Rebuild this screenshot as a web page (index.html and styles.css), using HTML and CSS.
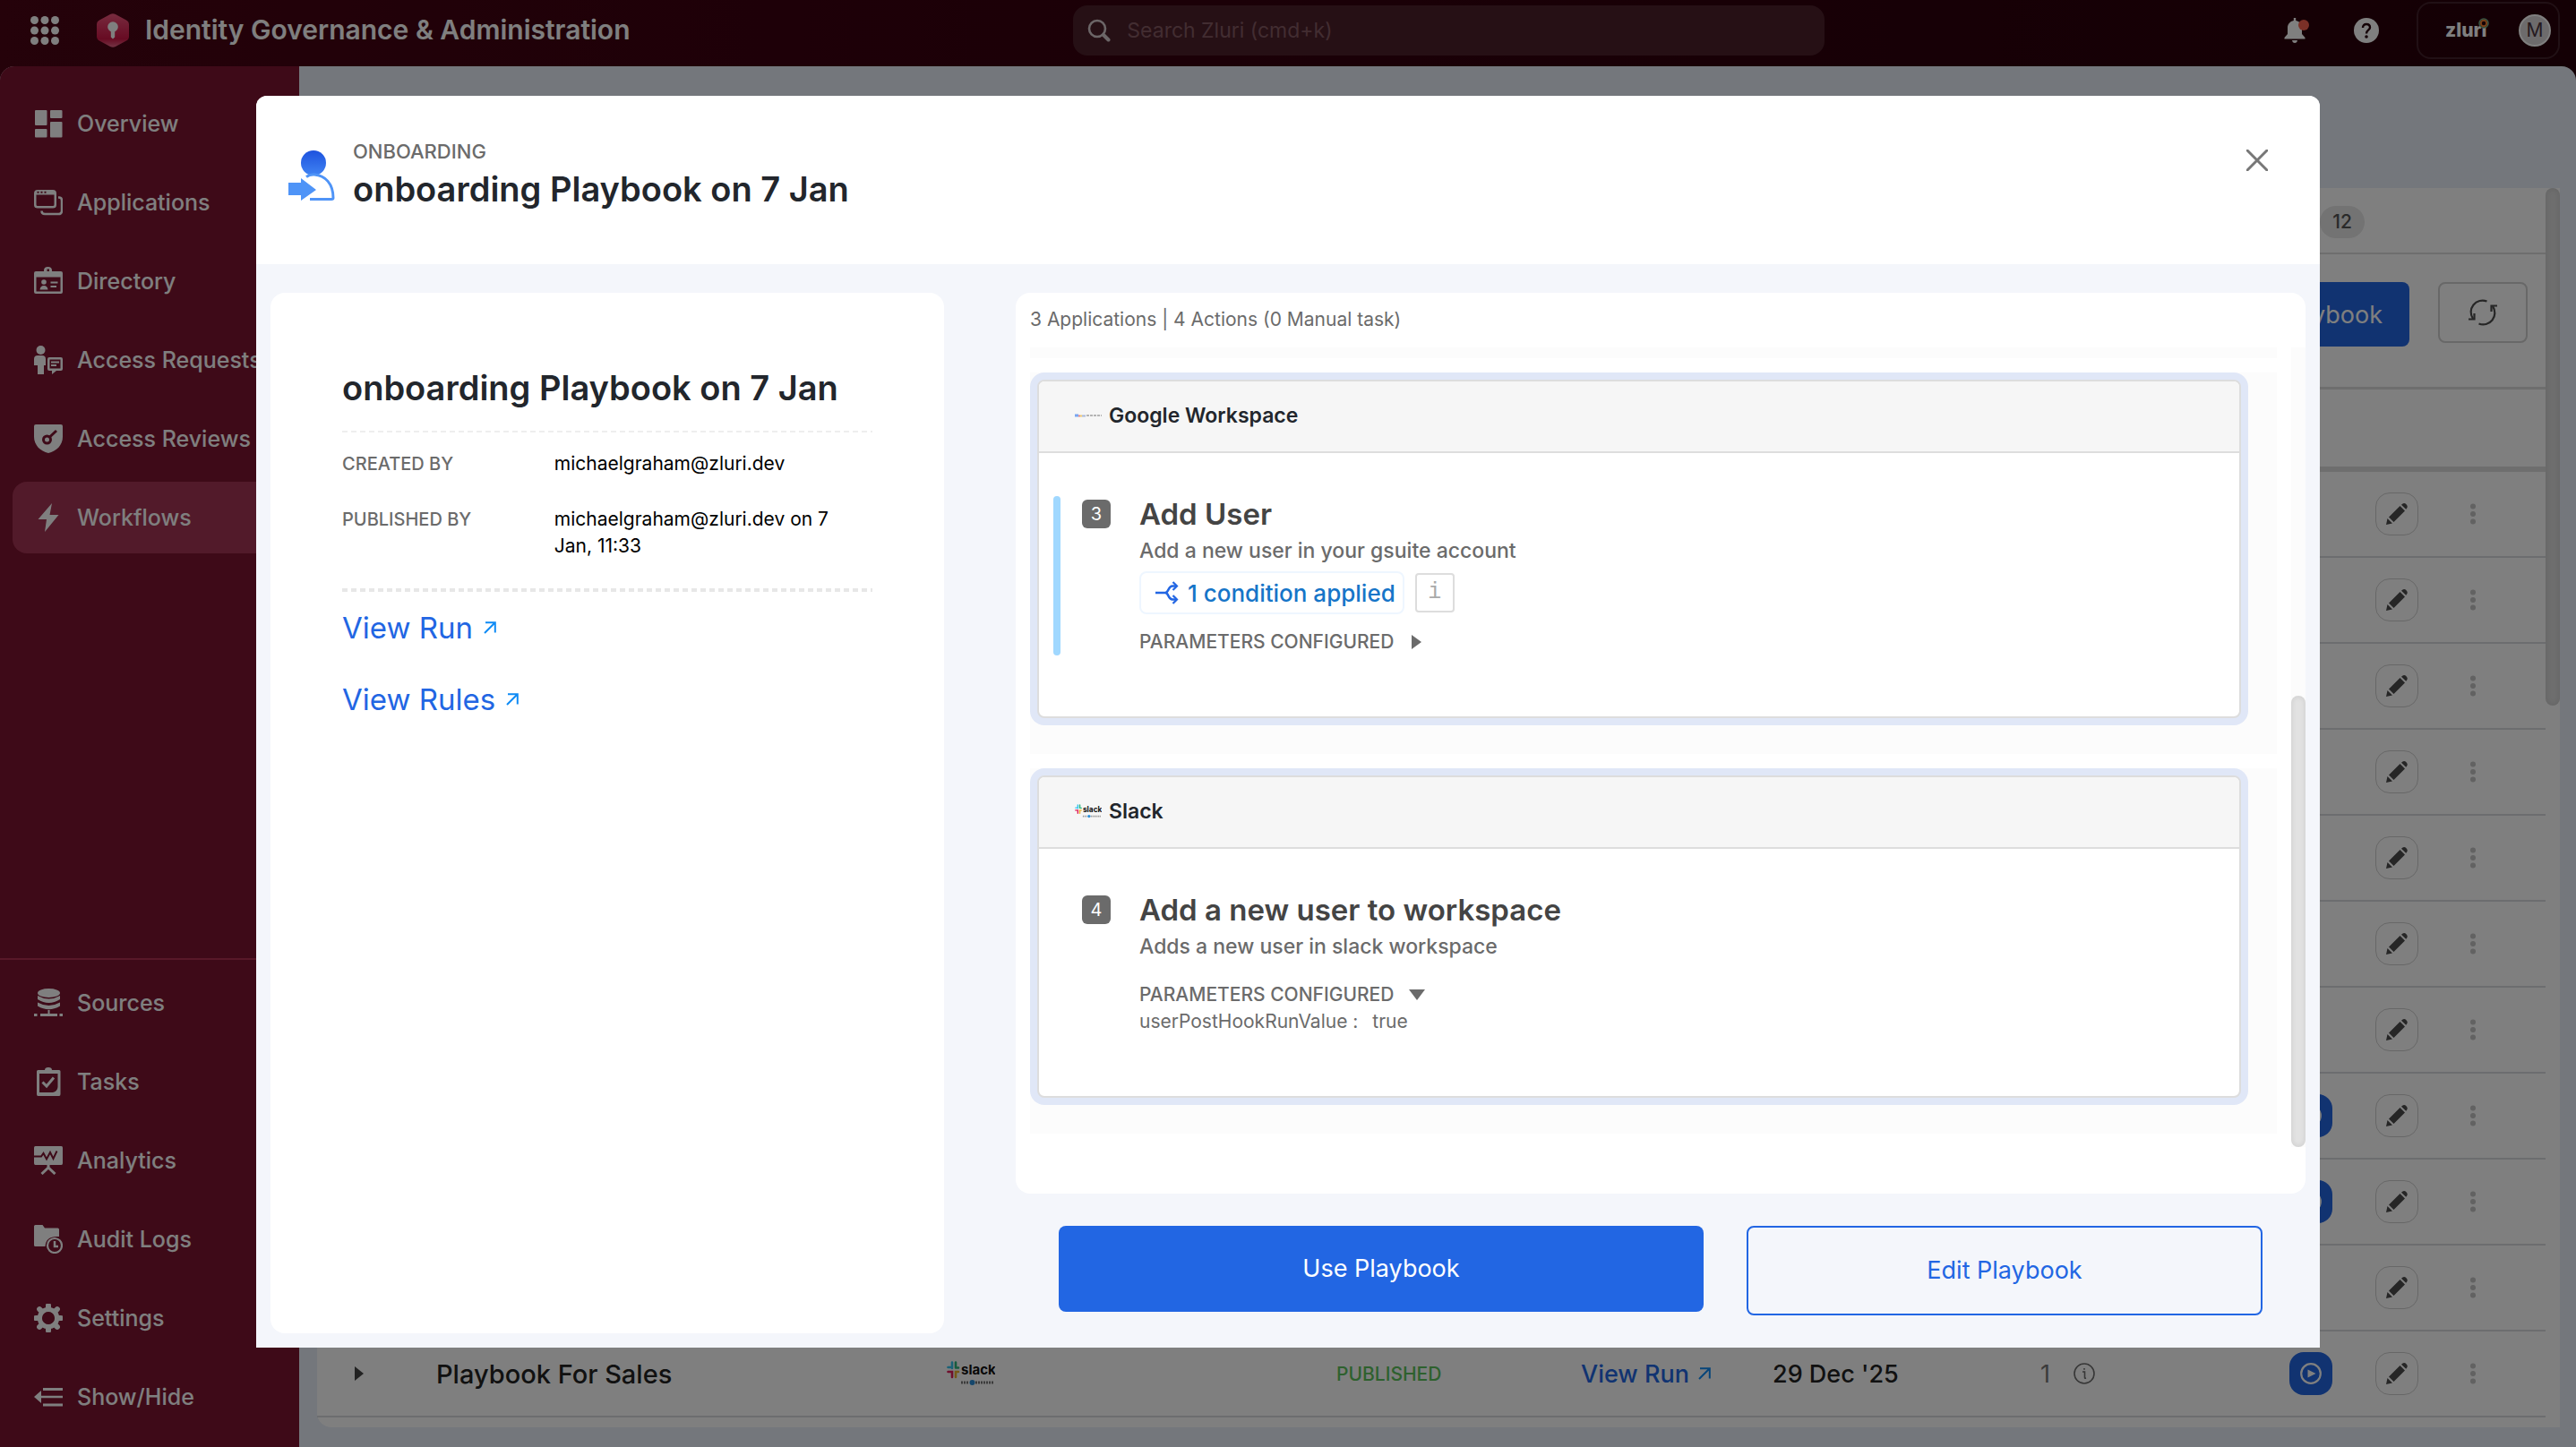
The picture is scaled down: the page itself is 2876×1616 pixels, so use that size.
FILE: index.html
```html
<!DOCTYPE html>
<html lang="en">
<head>
<meta charset="utf-8">
<title>Identity Governance &amp; Administration</title>
<link rel="stylesheet" href="styles.css">
</head>
<body>
<svg class="sprite" aria-hidden="true">
  <symbol id="i-pencil" viewBox="0 0 24 24"><path d="M0 24 1.500 17 7 22.500ZM3 15.500 15.500 3 21 8.500 8.500 21ZM17 1.800 18.200.8C19.500-.3 21-.2 22.300 1 24 2.600 24.200 4.200 23 5.700L22.200 6.800Z" fill="#4c4c4c"/></symbol>
  <symbol id="i-dots" viewBox="0 0 8 24"><circle cx="4" cy="3.500" r="3"/><circle cx="4" cy="12" r="3"/><circle cx="4" cy="20.500" r="3"/></symbol>
  <symbol id="i-play" viewBox="0 0 24 24"><circle cx="12" cy="12" r="10.800" fill="none" stroke="#fff" stroke-width="2.200"/><path d="M8.500 7.500 17.500 12 8.500 16.500Z" fill="#fff"/></symbol>
  <symbol id="i-out" viewBox="0 0 14 14"><path d="M1 13 12.500 1.500M2 1.200H12.800V12.500" fill="none" stroke="#0f8bf5" stroke-width="2"/></symbol>
  <symbol id="i-hash" viewBox="0 0 15 24"><g fill="none" stroke-width="2.600" stroke-linecap="round"><path d="M6 4.500V11M1.500 10H6" stroke="#36c5f0"/><path d="M10 4.500V10M10 10.500H13" stroke="#2eb67d"/><path d="M1.500 15H6V21" stroke="#e01e5a"/><path d="M10 21V15H13" stroke="#ecb22e"/></g></symbol>
</svg>

<header class="topbar">
  <div class="brand">
    <button class="plain" aria-label="Apps"><svg width="32" height="32" viewBox="0 0 32 32" fill="#fff"><circle cx="4.500" cy="4.500" r="4.500"/><circle cx="16" cy="4.500" r="4.500"/><circle cx="27.500" cy="4.500" r="4.500"/><circle cx="4.500" cy="16" r="4.500"/><circle cx="16" cy="16" r="4.500"/><circle cx="27.500" cy="16" r="4.500"/><circle cx="4.500" cy="27.500" r="4.500"/><circle cx="16" cy="27.500" r="4.500"/><circle cx="27.500" cy="27.500" r="4.500"/></svg></button>
    <svg class="logo" width="36" height="38" viewBox="0 0 36 38"><defs><linearGradient id="g1" x1="0" y1="0" x2="0" y2="1"><stop offset="0" stop-color="#f0587e"/><stop offset=".75" stop-color="#cf1646"/><stop offset="1" stop-color="#e86a8a"/></linearGradient></defs><path d="M15 1Q18-.5 21 1L33 7.500Q36 9 36 12.500V25.500Q36 29 33 30.500L21 37Q18 38.500 15 37L3 30.500Q0 29 0 25.500V12.500Q0 9 3 7.500Z" fill="url(#g1)"/><circle cx="18" cy="15" r="5.800" fill="#fff"/><path d="M15.800 18H20.200V26.500L18 28.500 15.800 26.500Z" fill="#fff"/></svg>
    <h1>Identity Governance &amp; Administration</h1>
  </div>
  <label class="search">
    <svg width="26" height="26" viewBox="0 0 26 26" fill="none" stroke="#d8cccf" stroke-width="2.600" stroke-linecap="round"><circle cx="11" cy="11" r="9"/><path d="M18 18 23.500 23.500" stroke-width="4"/></svg>
    <input type="text" placeholder="Search Zluri (cmd+k)" aria-label="Search Zluri">
  </label>
  <div class="tools">
    <button class="plain" aria-label="Notifications"><svg width="28" height="28" viewBox="0 0 28 28"><path d="M10.800 0H13.200V3C17.500 4 20 7 20 11V18L23.500 22V23.500H.5V22L4 18V11C4 7 6.500 4 10.800 3Z" fill="#fff"/><path d="M9 25H15Q14.500 28 12 28T9 25Z" fill="#fff"/><circle cx="22" cy="8" r="6" fill="#f5604e"/></svg></button>
    <button class="plain" aria-label="Help"><svg width="28" height="28" viewBox="0 0 28 28"><circle cx="14" cy="14" r="14" fill="#fff"/><path d="M10 11Q10 7 14 7T18 10.800C18 13.500 14 13.500 14 17.500" fill="none" stroke="#28000c" stroke-width="2.400"/><circle cx="14" cy="21" r="1.800" fill="#28000c"/></svg></button>
    <button class="account"><span class="wordmark">zluri<svg class="eye" width="12" height="12" viewBox="0 0 12 12"><circle cx="6" cy="6" r="5" fill="#28000c" stroke="#6fae8c" stroke-width="1.500"/><circle cx="6" cy="6" r="3.200" fill="none" stroke="#f08030" stroke-width="2"/></svg></span><span class="avatar">M</span></button>
  </div>
</header>

<div class="shell">
  <nav class="sidebar" aria-label="Main">
    <div class="nav-group">
      <a href="#"><svg viewBox="0 0 32 32"><rect x="1" y="1" width="13.500" height="17" rx="1"/><rect x="18" y="1" width="13.500" height="9" rx="1"/><rect x="1" y="22" width="13.500" height="9.500" rx="1"/><rect x="18" y="14" width="13.500" height="17.500" rx="1"/></svg>Overview</a>
      <a href="#"><svg viewBox="0 0 32 32"><path fill-rule="evenodd" d="M4 2H21Q25 2 25 6V19Q25 22.500 21 22.500H4Q0 22.500 0 19V6Q0 2 4 2ZM2.500 7.500V18.500Q2.500 20 4 20H21Q22.500 20 22.500 18.500V7.500ZM3.500 3.800V5.800H5.500V3.800ZM7.500 3.800V5.800H9.500V3.800ZM11.500 3.800V5.800H13.500V3.800Z"/><path d="M27 10.500H28Q31 10.500 31 14V25Q31 29 27.500 29H12Q8.500 29 8.500 25.500" fill="none" stroke="#fff" stroke-width="2.500"/></svg>Applications</a>
      <a href="#"><svg viewBox="0 0 32 32"><path fill-rule="evenodd" d="M2 5H11V4Q11 0 15.500 0T20 4V5H30Q32 5 32 7V28Q32 30 30 30H2Q0 30 0 28V7Q0 5 2 5ZM14.500 2.500V5H17V2.500ZM2.500 11.500V27.500H29.500V11.500Z"/><circle cx="11" cy="17" r="2.800"/><path d="M6.500 25.500Q7 21 11 21T15.500 25.500ZM18.500 16.500H26.500V18.500H18.500ZM18.500 21H25V23H18.500Z"/></svg>Directory</a>
      <a href="#"><svg viewBox="0 0 32 32"><circle cx="7.500" cy="5" r="5"/><path d="M4 11H9Q13 11 13 15V22H11V32H4V22H0V15Q0 11 4 11Z"/><path fill-rule="evenodd" d="M17 13H30Q32 13 32 15V26Q32 28 30 28H25L20 32V28H17Q15 28 15 26V15Q15 13 17 13ZM17.500 15.500V25.500H29.500V15.500ZM19 17.500H28V19.500H19ZM19 21H25V23H19Z"/></svg>Access Requests</a>
      <a href="#"><svg viewBox="0 0 32 32"><path d="M2 0H30Q32 0 32 2V14C32 23 25 30 16 32 7 30 0 23 0 14V2Q0 0 2 0Z"/><circle cx="14.500" cy="17" r="4" fill="none" stroke="#7c1430" stroke-width="3"/><path d="M17 14.500 25 7" stroke="#7c1430" stroke-width="3"/></svg>Access Reviews</a>
      <a href="#" class="active"><svg viewBox="0 0 32 32"><path d="M20 0 4.500 18H14L12 32 27.500 13H17.500Z"/></svg>Workflows</a>
    </div>
    <div class="nav-group nav-bottom">
      <a href="#"><svg viewBox="0 0 32 32"><ellipse cx="16.500" cy="5" rx="12.500" ry="5"/><path d="M4 8Q16.500 15 29 8V12Q16.500 20 4 12ZM4 15.500Q16.500 22.500 29 15.500V19.500Q16.500 27 4 19.500ZM15.500 24H17.500V28H26V31H7V28H15.500ZM0 28H3.500V31H0ZM28.500 28H32V31H28.500Z"/></svg>Sources</a>
      <a href="#"><svg viewBox="0 0 32 32"><path fill-rule="evenodd" d="M4.500 3H12Q12 0 16 0T20 3H28Q29.500 3 29.500 4.500V30Q29.500 32 28 32H4.500Q3 32 3 30V4.500Q3 3 4.500 3ZM6 7V28H21Q26 27 26.500 22V7Z"/><path d="M9.500 16.500 14 21 22 11.500" fill="none" stroke="#fff" stroke-width="3"/></svg>Tasks</a>
      <a href="#"><svg viewBox="0 0 32 32"><path d="M1.500 0H30.500Q32 0 32 1.500V19Q32 21 30.500 21H1.500Q0 21 0 19V1.500Q0 0 1.500 0Z"/><path d="M0 11.500H8L10.500 8 14 14.500 18 7 21.500 14 25.500 5.500" fill="none" stroke="#7c1430" stroke-width="2"/><path d="M16 21V24M8.500 31 16 24 23.500 31" fill="none" stroke="#fff" stroke-width="3"/></svg>Analytics</a>
      <a href="#"><svg viewBox="0 0 32 32"><path d="M1.500 0H9.500L12 3.500H26.500Q28 3.500 28 5V13Q13 12 12.500 24H1.500Q0 24 0 22.500V1.500Q0 0 1.500 0Z"/><circle cx="23" cy="23" r="8" fill="none" stroke="#fff" stroke-width="2.200"/><path d="M23 18V24H27" fill="none" stroke="#fff" stroke-width="2.500"/></svg>Audit Logs</a>
      <a href="#"><svg viewBox="0 0 32 32"><circle cx="16" cy="16" r="9.500" fill="none" stroke="#fff" stroke-width="5.500"/><path d="M16 2V6M16 26V30M2 16H6M26 16H30M6.100 6.100 9 9M23 23 25.900 25.900M6.100 25.900 9 23M23 9 25.900 6.100" stroke="#fff" stroke-width="6" stroke-linecap="round"/><circle cx="16" cy="16" r="7" fill="#7c1430"/></svg>Settings</a>
      <a href="#"><svg viewBox="0 0 32 32"><path d="M0 16 8 9V23ZM7 14.800H32V17.200H7ZM10 6H32V9H10ZM10 23.500H32V26.500H10Z"/></svg>Show/Hide</a>
    </div>
  </nav>

  <main class="main">
    <section class="panel">
      <div class="panel-body">
        <div class="tabs"><span class="count">12</span></div>
        <div class="toolbar">
          <button class="create">Create Playbook</button>
          <button class="refresh" aria-label="Refresh"><svg width="32" height="32" viewBox="0 0 32 32" fill="none" stroke="#4d4d4d" stroke-width="2.200"><path d="M20.500 3.500A13 13 0 0 0 5 23M11.500 28.500A13 13 0 0 0 27 9"/><path d="M0 23.500H6.500V17M32 8.500H25.500V15"/></svg></button>
        </div>
        <div class="table-head"></div>
        <table class="rows">
          <colgroup><col class="c-caret"><col><col class="c-apps"><col class="c-status"><col class="c-run"><col class="c-date"><col class="c-count"><col class="c-play"><col class="c-edit"><col class="c-menu"></colgroup>
          <tbody>
            <tr><td colspan="8"></td><td><button class="edit" aria-label="Edit"><svg><use href="#i-pencil"/></svg></button></td><td><button class="menu" aria-label="More"><svg><use href="#i-dots"/></svg></button></td></tr>
            <tr><td colspan="8"></td><td><button class="edit" aria-label="Edit"><svg><use href="#i-pencil"/></svg></button></td><td><button class="menu" aria-label="More"><svg><use href="#i-dots"/></svg></button></td></tr>
            <tr><td colspan="8"></td><td><button class="edit" aria-label="Edit"><svg><use href="#i-pencil"/></svg></button></td><td><button class="menu" aria-label="More"><svg><use href="#i-dots"/></svg></button></td></tr>
            <tr><td colspan="8"></td><td><button class="edit" aria-label="Edit"><svg><use href="#i-pencil"/></svg></button></td><td><button class="menu" aria-label="More"><svg><use href="#i-dots"/></svg></button></td></tr>
            <tr><td colspan="8"></td><td><button class="edit" aria-label="Edit"><svg><use href="#i-pencil"/></svg></button></td><td><button class="menu" aria-label="More"><svg><use href="#i-dots"/></svg></button></td></tr>
            <tr><td colspan="8"></td><td><button class="edit" aria-label="Edit"><svg><use href="#i-pencil"/></svg></button></td><td><button class="menu" aria-label="More"><svg><use href="#i-dots"/></svg></button></td></tr>
            <tr><td colspan="8"></td><td><button class="edit" aria-label="Edit"><svg><use href="#i-pencil"/></svg></button></td><td><button class="menu" aria-label="More"><svg><use href="#i-dots"/></svg></button></td></tr>
            <tr><td colspan="7"></td><td><button class="play" aria-label="Run"><svg><use href="#i-play"/></svg></button></td><td><button class="edit" aria-label="Edit"><svg><use href="#i-pencil"/></svg></button></td><td><button class="menu" aria-label="More"><svg><use href="#i-dots"/></svg></button></td></tr>
            <tr><td colspan="7"></td><td><button class="play" aria-label="Run"><svg><use href="#i-play"/></svg></button></td><td><button class="edit" aria-label="Edit"><svg><use href="#i-pencil"/></svg></button></td><td><button class="menu" aria-label="More"><svg><use href="#i-dots"/></svg></button></td></tr>
            <tr><td colspan="8"></td><td><button class="edit" aria-label="Edit"><svg><use href="#i-pencil"/></svg></button></td><td><button class="menu" aria-label="More"><svg><use href="#i-dots"/></svg></button></td></tr>
            <tr>
              <td><button class="caret" aria-label="Expand"><svg width="12" height="16" viewBox="0 0 12 16"><path d="M1 0 11 8 1 16Z" fill="#444"/></svg></button></td>
              <td class="name">Playbook For Sales</td>
              <td><svg class="app-logo" viewBox="0 0 54 34"><use href="#i-hash" width="15" height="24"/><text x="16" y="18" class="slack-word">slack</text><path d="M16 27H25M32 27H52" stroke="#777" stroke-width="3" stroke-dasharray="2 1"/><circle cx="28.500" cy="27" r="3" fill="#2a8fd8"/></svg></td>
              <td class="status">PUBLISHED</td>
              <td><a class="run" href="#">View Run<svg width="14" height="14"><use href="#i-out"/></svg></a></td>
              <td class="date">29 Dec '25</td>
              <td><span class="num">1<svg width="24" height="24" viewBox="0 0 24 24" fill="none" stroke="#6e6e6e" stroke-width="1.600"><circle cx="12" cy="12" r="11"/><path d="M10 10H12.500V16.500Q12.500 17.500 14 17M12 6V7.800"/></svg></span></td>
              <td><button class="play" aria-label="Run"><svg><use href="#i-play"/></svg></button></td>
              <td><button class="edit" aria-label="Edit"><svg><use href="#i-pencil"/></svg></button></td>
              <td><button class="menu" aria-label="More"><svg><use href="#i-dots"/></svg></button></td>
            </tr>
          </tbody>
        </table>
      </div>
      <div class="page-scroll"><div class="page-thumb"></div></div>
    </section>
  </main>
</div>

<div class="overlay">
  <div class="modal" role="dialog" aria-modal="true" aria-labelledby="modal-title">
    <header class="modal-head">
      <svg width="52" height="56" viewBox="0 0 52 56"><defs><linearGradient id="g2" x1="0" y1="0" x2="0" y2="1"><stop offset="0" stop-color="#1d52de"/><stop offset="1" stop-color="#4184f3"/></linearGradient></defs><circle cx="28" cy="14" r="14" fill="url(#g2)"/><path d="M20 29.500Q24 26.500 29 27C41 28 50 37 50 53Q50 54.500 48 54.500H24" fill="none" stroke="#4f94f7" stroke-width="3"/><path d="M0 36H14V31L31 44 14 56V50H0Z" fill="#4f94f7"/></svg>
      <div class="modal-titles">
        <p class="eyebrow">ONBOARDING</p>
        <h2 id="modal-title">onboarding Playbook on 7 Jan</h2>
      </div>
      <button class="close" aria-label="Close"><svg width="24" height="24" viewBox="0 0 24 24"><path d="M0 0 24 24M24 0 0 24" stroke="#777" stroke-width="3"/></svg></button>
    </header>
    <div class="modal-body">
      <section class="info">
        <h3>onboarding Playbook on 7 Jan</h3>
        <hr class="dash">
        <dl class="facts">
          <dt>CREATED BY</dt><dd>michaelgraham@zluri.dev</dd>
          <dt>PUBLISHED BY</dt><dd>michaelgraham@zluri.dev on 7 Jan, 11:33</dd>
        </dl>
        <hr class="dash thick">
        <div class="links">
          <a href="#">View Run<svg width="14" height="14"><use href="#i-out"/></svg></a>
          <a href="#">View Rules<svg width="14" height="14"><use href="#i-out"/></svg></a>
        </div>
      </section>
      <section class="work">
        <div class="steps-panel">
          <p class="summary">3 Applications | 4 Actions (0 Manual task)</p>
          <div class="scroller">
            <div class="steps">
              <div class="step-tail"></div>
              <article class="step">
                <div class="ring"><div class="card">
                  <header class="card-head"><svg width="30" height="8" viewBox="0 0 30 8" role="img" aria-label="Google Workspace"><path d="M0 4H4" stroke="#7aa5f0" stroke-width="3"/><path d="M4 4.500H6" stroke="#ea8a80" stroke-width="2"/><path d="M6 4.500H8" stroke="#f0cc70" stroke-width="2"/><path d="M8 4.500H12" stroke="#a9b8d8" stroke-width="2"/><path d="M13 4H30" stroke="#b5b5b5" stroke-width="2" stroke-dasharray="3 1"/></svg><h4>Google Workspace</h4></header>
                  <div class="card-body">
                    <span class="bar on"></span><span class="index">3</span>
                    <div class="detail">
                      <h5>Add User</h5>
                      <p class="desc">Add a new user in your gsuite account</p>
                      <div class="conds">
                        <button class="cond"><svg width="26" height="28" viewBox="0 0 26 28" fill="none" stroke="#2266e3" stroke-width="2.600"><path d="M0 14H11C15 14 14 6.500 19 6.500H23M11 14C15 14 14 21.500 19 21.500H23"/><path d="M19.500 2 24 6.500 19.500 11M19.500 17 24 21.500 19.500 26" stroke-width="2.200"/></svg>1 condition applied</button>
                        <button class="hint" aria-label="Condition details">i</button>
                      </div>
                      <button class="params" aria-expanded="false">PARAMETERS CONFIGURED<svg width="20" height="20" viewBox="0 0 20 20"><path d="M4 2 15 10 4 18Z" fill="#6b6b6b"/></svg></button>
                    </div>
                  </div>
                </div></div>
              </article>
              <article class="step">
                <div class="ring"><div class="card">
                  <header class="card-head"><svg width="30" height="20" viewBox="0 0 54 34"><use href="#i-hash" width="15" height="24"/><text x="16" y="18" class="slack-word">slack</text><path d="M16 27H25M32 27H52" stroke="#999" stroke-width="3" stroke-dasharray="2 1"/><circle cx="28.500" cy="27" r="3" fill="#2a8fd8"/></svg><h4>Slack</h4></header>
                  <div class="card-body">
                    <span class="bar"></span><span class="index">4</span>
                    <div class="detail">
                      <h5>Add a new user to workspace</h5>
                      <p class="desc">Adds a new user in slack workspace</p>
                      <button class="params later" aria-expanded="true">PARAMETERS CONFIGURED<svg width="20" height="20" viewBox="0 0 20 20"><path d="M1 4H19L10 16Z" fill="#6b6b6b"/></svg></button>
                      <p class="pair"><span>userPostHookRunValue :</span><span>true</span></p>
                    </div>
                  </div>
                </div></div>
              </article>
            </div>
            <div class="track"><div class="thumb"></div></div>
          </div>
        </div>
        <div class="actions">
          <button class="use">Use Playbook</button>
          <button class="edit-playbook">Edit Playbook</button>
        </div>
      </section>
    </div>
  </div>
</div>
</body>
</html>
```
FILE: styles.css
```css
* { box-sizing: border-box; }
body, h1, h2, h3, h4, h5, p, dl, dd, hr { margin: 0; }
body {
  font-family: Inter, "Liberation Sans", sans-serif;
  min-height: 100vh;
  display: flex;
  flex-direction: column;
  background: linear-gradient(90deg, #4a0414 0, #38000f 40%, #28000a 100%);
  overflow-x: hidden;
}
button, input { font: inherit; }
button { cursor: pointer; padding: 0; background: none; border: 0; }
a { text-decoration: none; }
svg { display: block; flex: none; }
.sprite { position: absolute; width: 0; height: 0; }

/* top bar */
.topbar {
  display: grid;
  grid-template-columns: 10fr 7fr 7fr;
  align-items: center;
  height: 74px;
  padding-bottom: 6px;
}
.brand { display: flex; align-items: center; padding-left: 34px; }
.logo { margin: 0 18px 0 42px; }
.brand h1 { padding-bottom: 2px; color: #fff; font-size: 30px; font-weight: 600; line-height: 40px; white-space: nowrap; }
.search {
  display: flex;
  align-items: center;
  gap: 18px;
  height: 56px;
  padding: 0 16px;
  border-radius: 16px;
  background: #4c202b;
}
.search input { flex: 1; border: 0; background: none; outline: 0; color: #fff; font-size: 23px; padding: 0; }
.search input::placeholder { color: #855a63; opacity: 1; }
.tools { display: flex; align-items: center; justify-content: flex-end; padding-right: 18px; }
.tools .plain { margin-right: 50px; }
.tools .plain + .plain { margin-right: 42px; }
.account {
  display: flex;
  align-items: center;
  justify-content: space-between;
  width: 160px;
  height: 64px;
  padding: 0 8px 0 30px;
  border: 2px solid #42202a;
  border-radius: 16px;
}
.wordmark { position: relative; color: #fff; font-size: 21px; font-weight: 800; line-height: 28px; }
.eye { position: absolute; right: -3px; top: 0; }
.avatar { width: 36px; height: 36px; border-radius: 50%; background: #dad6d8; border: 2px solid #fff; color: #4a3440; font-size: 21px; line-height: 32px; text-align: center; }

/* shell and navigation */
.shell { flex: 1; display: flex; border-radius: 16px 16px 0 0; overflow: hidden; background: #e8eef8; }
.sidebar {
  width: 334px;
  flex: none;
  display: flex;
  flex-direction: column;
  justify-content: space-between;
  background: #7c1430;
}
.nav-group { display: flex; flex-direction: column; gap: 8px; padding: 24px 14px 0; }
.nav-bottom { padding-top: 8px; padding-bottom: 16px; border-top: 2px solid #b03050; }
.nav-group a {
  display: flex;
  align-items: center;
  gap: 16px;
  height: 80px;
  padding-left: 24px;
  border-radius: 16px;
  color: #fff;
  font-size: 25px;
  font-weight: 500;
  white-space: nowrap;
}
.nav-group a svg { width: 32px; height: 32px; fill: #fff; }
.nav-group a.active { background: #a43454; }

/* playbook list */
.main { flex: 1; padding: 136px 18px 22px 20px; display: flex; }
.panel { flex: 1; display: flex; background: #fff; border-radius: 0 0 0 16px; padding-bottom: 11px; }
.panel-body { flex: 1; min-width: 0; }
.tabs { display: flex; justify-content: flex-end; height: 74px; padding: 20px 202px 0 0; border-bottom: 2px solid #dcdcdc; }
.count { width: 50px; height: 36px; line-height: 36px; border-radius: 18px; background: #e6e6e6; color: #555; font-size: 21px; font-weight: 500; text-align: center; }
.toolbar { display: flex; justify-content: flex-end; align-items: flex-start; gap: 32px; height: 151px; padding: 31px 20px 0 0; border-bottom: 3px solid #dcdcdc; }
.create { height: 72px; padding: 0 30px; border-radius: 8px; background: #2266e3; color: #fff; font-size: 27px; }
.refresh { display: grid; place-items: center; width: 100px; height: 68px; border: 2px solid #d0d0d0; border-radius: 8px; }
.table-head { height: 92px; border-bottom: 6px solid #dcdcdc; }
.rows { width: 100%; table-layout: fixed; border-collapse: separate; border-spacing: 0; }
.rows td { height: 96px; padding: 0; border-bottom: 2px solid #d8dbdf; vertical-align: middle; }
.c-caret { width: 133px; }
.c-apps { width: 435px; }
.c-status { width: 273px; }
.c-run { width: 214px; }
.c-date { width: 299px; }
.c-count { width: 278px; }
.c-play { width: 96px; }
.c-edit { width: 104px; }
.c-menu { width: 86px; }
.edit, .play { display: grid; place-items: center; width: 48px; height: 48px; border-radius: 16px; }
.edit { border: 1px solid #cfcfcf; }
.play { background: #2266e3; }
.edit svg, .play svg { width: 24px; height: 24px; }
.menu { display: block; padding: 0 1px; }
.menu svg { width: 8px; height: 24px; fill: #c4c4c4; }
.caret { display: block; margin-left: 41px; }
.name { color: #222; font-size: 29px; font-weight: 500; }
.app-logo { width: 54px; height: 34px; }
.slack-word { font-size: 15px; font-weight: 700; fill: #111; }
.status { color: #5cc25c; font-size: 21px; font-weight: 500; }
.run { display: flex; align-items: center; gap: 10px; color: #2266e3; font-size: 27px; font-weight: 500; }
.date { color: #222; font-size: 27px; font-weight: 500; }
.num { display: flex; align-items: center; gap: 26px; color: #777; font-size: 27px; }
.page-scroll { width: 16px; }
.page-thumb { height: 578px; border-radius: 8px; background: #dcdcdc; box-shadow: inset 0 0 6px rgba(0, 0, 0, .1); }

/* modal */
.overlay { position: fixed; inset: 0; padding: 107px 286px; background: rgba(0, 0, 0, .5); overflow: hidden; }
.modal { border-radius: 12px 12px 0 0; background: #f4f6fb; overflow: hidden; }
.modal-head { display: flex; align-items: center; gap: 20px; height: 188px; padding: 48px 46px 59px 36px; background: #fff; }
.modal-titles { flex: 1; padding-bottom: 2px; }
.eyebrow { margin-bottom: 4px; color: #6b6b6b; font-size: 22px; font-weight: 500; line-height: 28px; }
h2, h3 { color: #22262c; font-size: 38px; font-weight: 600; line-height: 48px; }
.close { align-self: flex-start; display: grid; place-items: center; width: 48px; height: 48px; }
.modal-body { display: grid; grid-template-columns: 47fr 90fr; gap: 80px; padding: 32px 16px 16px; }
.info { padding: 82px 80px; border-radius: 16px; background: #fff; }
.dash { height: 2px; border: 0; background: repeating-linear-gradient(90deg, #eee 0 6px, transparent 6px 10px); }
.dash.thick { height: 4px; background: repeating-linear-gradient(90deg, #e7e7e7 0 6px, transparent 6px 10px); }
h3 + .dash { margin-top: 24px; }
.facts { display: grid; grid-template-columns: 2fr 3fr; row-gap: 32px; padding: 20px 0 32px; font-size: 21px; line-height: 30px; }
.facts dt { color: #6b6b6b; font-size: 20px; font-weight: 500; }
.facts dd { padding-right: 24px; color: #000; }
.links { display: flex; flex-direction: column; align-items: flex-start; gap: 40px; padding-top: 20px; }
.links a { display: flex; align-items: center; gap: 12px; color: #2266e3; font-size: 33px; line-height: 40px; }

.steps-panel { padding: 0 0 52px 16px; border-radius: 16px; background: #fff; overflow: hidden; }
.summary { height: 61px; color: #6b6b6b; font-size: 21px; line-height: 60px; }
.scroller { display: flex; gap: 16px; height: 893px; overflow: hidden; }
.steps { flex: 1; display: flex; flex-direction: column; gap: 16px; }
.step-tail { height: 12px; background: #fcfcfc; }
.step { padding: 0 32px 32px 0; background: #fcfcfc; }
.ring { padding: 8px; border-radius: 16px; background: #e0e7f7; }
.card { border: 2px solid #ddd; border-radius: 8px; background: #fff; overflow: hidden; }
.card-head { display: flex; align-items: center; gap: 8px; height: 80px; padding: 0 0 2px 40px; border-bottom: 2px solid #ddd; background: #f6f6f6; }
h4 { color: #22262c; font-size: 23px; font-weight: 600; line-height: 32px; }
.card-body { display: flex; padding: 48px 16px 68px; }
.bar { width: 8px; border-radius: 4px; margin-right: 24px; }
.bar.on { background: #a0d8ff; }
.index { width: 32px; height: 32px; margin: 4px 32px 0 0; border-radius: 6px; background: #6b6b6b; color: #fff; font-size: 20px; line-height: 32px; text-align: center; }
h5 { color: #444; font-size: 33px; font-weight: 600; line-height: 40px; }
.desc { margin-top: 5px; color: #6b6b6b; font-size: 23px; font-weight: 500; line-height: 32px; }
.conds { display: flex; align-items: center; gap: 12px; margin: 7px 0 16px; }
.cond { display: flex; align-items: center; gap: 10px; height: 48px; padding: 0 8px 0 16px; border: 2px solid #eef6ff; border-radius: 8px; color: #1675c8; font-size: 26px; font-weight: 500; }
.hint { width: 44px; height: 44px; border: 2px solid #ddd; border-radius: 4px; color: #aaa; font-family: "Liberation Mono", monospace; font-size: 25px; line-height: 40px; }
.params { display: flex; align-items: center; gap: 16px; color: #6b6b6b; font-size: 21px; font-weight: 500; line-height: 30px; }
.params.later { margin-top: 23px; }
.pair { display: flex; gap: 16px; color: #6b6b6b; font-size: 21px; line-height: 30px; }
.track { display: flex; flex-direction: column; justify-content: flex-end; width: 16px; background: #fcfcfc; }
.thumb { height: 504px; border-radius: 8px; background: #e2e2e2; box-shadow: inset 0 0 6px rgba(0, 0, 0, .1); }

.actions { display: grid; grid-template-columns: 5fr 4fr; align-items: start; gap: 48px; padding: 36px 48px 20px; }
.use, .edit-playbook { padding-bottom: 2px; border-radius: 8px; font-size: 27px; }
.use { height: 96px; background: #2266e3; color: #fff; }
.edit-playbook { height: 100px; border: 2px solid #2266e3; color: #2266e3; }
```
